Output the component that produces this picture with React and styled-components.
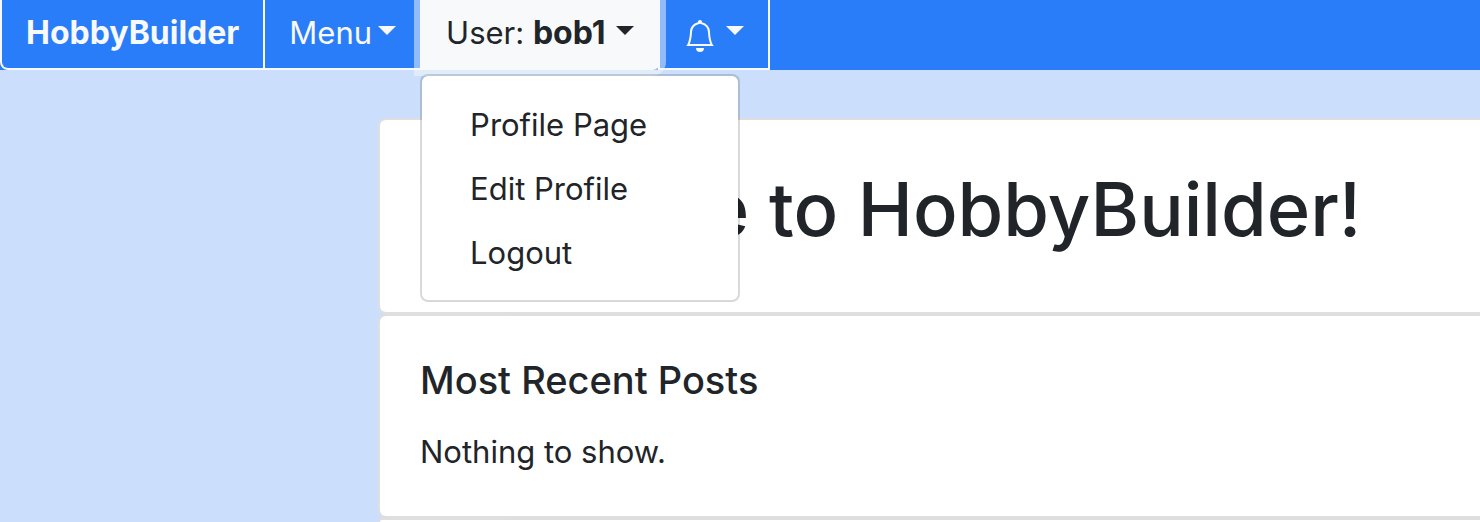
import React from "react";
import styled, { createGlobalStyle, css } from "styled-components";
import { BsBell } from "react-icons/bs";

const GlobalStyle = createGlobalStyle`
  *, *::before, *::after { box-sizing: border-box; }
  body {
    margin: 0;
    background: #cbdefc;
    color: #212529;
    font-family: Inter, "Liberation Sans", sans-serif;
    font-size: 31px;
    line-height: 48px;
  }
`;

const Page = styled.div`
  display: flex;
  flex-direction: column;
  min-height: 100vh;
`;

const Navbar = styled.nav`
  display: flex;
  background: #2a7df8;
`;

const navCell = css`
  display: flex;
  align-items: center;
  height: 70px;
  padding: 9px 24px 11px;
  border: solid #f8f9fa;
  border-width: 0 2px 2px;
  background: transparent;
  color: #f8f9fa;
  font: inherit;
  white-space: nowrap;
`;

const Brand = styled.a`
  ${navCell}
  border-bottom-left-radius: 8px;
  font-size: 32px;
  font-weight: 700;
  text-decoration: none;
`;

const Dropdown = styled.div`
  position: relative;
  margin-left: -2px;
`;

const Toggle = styled.button`
  ${navCell}
  gap: ${({ $wide }) => ($wide ? 10 : 6)}px;
  ${({ $open }) =>
    $open &&
    css`
      position: relative;
      z-index: 1;
      background: #f8f9fa;
      color: #212529;
      border-bottom-right-radius: 8px;
      box-shadow: 0 0 0 6px rgba(248, 249, 250, 0.5);
    `}

  &::after {
    content: "";
    border-top: 9px solid;
    border-right: 9px solid transparent;
    border-left: 9px solid transparent;
    margin-bottom: 6px;
  }
`;

const UserName = styled.strong`
  font-size: 32px;
  font-weight: 700;
`;

const BellIcon = styled(BsBell)`
  width: 32px;
  height: 32px;
  margin-top: 6px;
`;

const Menu = styled.ul`
  position: absolute;
  z-index: 2;
  top: 74px;
  left: 0;
  width: 320px;
  margin: 0;
  padding: 16px 0;
  list-style: none;
  background: #fff;
  background-clip: padding-box;
  border: 2px solid rgba(0, 0, 0, 0.15);
  border-radius: 8px;
`;

const MenuLink = styled.a`
  display: block;
  padding: 9px 48px 7px;
  color: #212529;
  text-decoration: none;
`;

const Main = styled.main`
  flex: 1;
  display: flex;
  flex-direction: column;
  padding: 48px 0 0 378px;
`;

const Card = styled.section`
  padding: 40px;
  background: #fff;
  border: 2px solid rgba(0, 0, 0, 0.125);
  border-right: 0;
  border-radius: 8px 0 0 8px;
  ${({ $continues }) =>
    $continues &&
    css`
      flex: 1;
      padding: 0;
      border-bottom: 0;
      border-bottom-left-radius: 0;
    `}
`;

const Title = styled.h1`
  margin: 0 0 14px;
  font-size: 74px;
  font-weight: 500;
  line-height: 98px;
  white-space: nowrap;
`;

const CardTitle = styled.h2`
  margin: 0 0 24px;
  font-size: 38px;
  font-weight: 500;
  line-height: 48px;
`;

const Text = styled.p`
  margin: 0;
`;

const links = ["Profile Page", "Edit Profile", "Logout"];

export default function App() {
  return (
    <Page>
      <GlobalStyle />
      <Navbar aria-label="Main">
        <Brand href="#home">HobbyBuilder</Brand>
        <Dropdown>
          <Toggle type="button" aria-haspopup="true">Menu</Toggle>
        </Dropdown>
        <Dropdown>
          <Toggle type="button" aria-haspopup="true" aria-expanded="true" $open $wide>
            <span>User: <UserName>bob1</UserName></span>
          </Toggle>
          <Menu>
            {links.map((label) => (
              <li key={label}>
                <MenuLink href="#profile">{label}</MenuLink>
              </li>
            ))}
          </Menu>
        </Dropdown>
        <Dropdown>
          <Toggle type="button" aria-haspopup="true" aria-label="Notifications" $wide>
            <BellIcon aria-hidden="true" />
          </Toggle>
        </Dropdown>
      </Navbar>
      <Main>
        <Card>
          <Title>Welcome to HobbyBuilder!</Title>
        </Card>
        <Card>
          <CardTitle>Most Recent Posts</CardTitle>
          <Text>Nothing to show.</Text>
        </Card>
        <Card $continues />
      </Main>
    </Page>
  );
}
